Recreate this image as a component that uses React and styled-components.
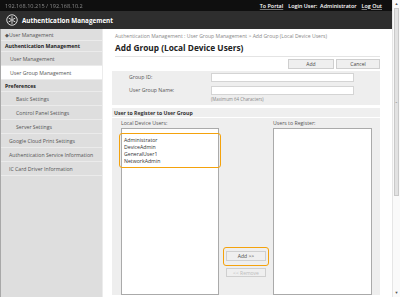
import React from "react";
import styled, { createGlobalStyle } from "styled-components";

const GlobalStyle = createGlobalStyle`
  html, body {
    margin: 0;
    padding: 0;
    width: 400px;
    height: 297px;
    overflow: hidden;
    background: #fff;
    font-family: "Open Sans", "Noto Sans", Arial, sans-serif;
  }
`;

const Page = styled.div`
  display: flex;
  width: 400px;
  height: 297px;
`;

const Window = styled.div`
  flex: 1;
  display: flex;
  flex-direction: column;
  min-width: 0;
`;

const TopBar = styled.div`
  height: 11px;
  background: #0f0f0f;
  display: flex;
  align-items: center;
  padding: 0 10px 0 5px;
  font-size: 5.4px;
  color: #fff;
`;

const Blurred = styled.span`
  color: #8a8a8a;
  filter: blur(0.7px);
  font-size: 5.6px;
`;

const TopLinks = styled.div`
  margin-left: auto;
  display: flex;
  gap: 5px;
  font-weight: 600;

  a {
    color: #fff;
    text-decoration: underline;
    text-decoration-color: #777;
  }
`;

const Header = styled.div`
  height: 18px;
  background: #2e2e2e;
  display: flex;
  align-items: center;
  gap: 4px;
  padding-left: 6px;
  color: #fff;
  font-weight: 700;
  font-size: 6.3px;
`;

const Body = styled.div`
  flex: 1;
  display: flex;
  min-height: 0;
`;

const Sidebar = styled.nav`
  width: 101px;
  flex-shrink: 0;
  background: #dedede;
  border-left: 1px solid #a8a8a8;
  border-right: 1px solid #ececec;
  display: flex;
  flex-direction: column;
  font-size: 5.2px;
  color: #555;
`;

const NavRow = styled.div`
  height: ${(p) => p.h || 14}px;
  display: flex;
  align-items: center;
  padding-left: ${(p) => p.indent}px;
  border-bottom: 1px solid #ebebeb;
  box-sizing: border-box;
  background: ${(p) => (p.active ? "#fff" : "transparent")};
  font-weight: ${(p) => (p.bold ? 700 : 400)};
  color: ${(p) => (p.bold ? "#222" : "#555")};
`;

const Content = styled.main`
  flex: 1;
  display: flex;
  flex-direction: column;
  padding: 2px 12px 2px 9px;
  min-width: 0;
`;

const Crumbs = styled.div`
  font-size: 5.1px;
  color: #888;
  padding-left: 3px;
  height: 9px;
  display: flex;
  align-items: center;
`;

const Title = styled.h1`
  margin: 0 0 0 3px;
  padding: 2px 0 3px;
  font-size: 8.3px;
  font-weight: 700;
  color: #222;
  border-bottom: 1px solid #e4e4e4;
`;

const ButtonRow = styled.div`
  display: flex;
  justify-content: flex-end;
  gap: 2px;
  padding: 2px 0;
`;

const Button = styled.button`
  display: block;
  width: ${(p) => p.w}px;
  height: ${(p) => p.h || 10}px;
  padding: 0;
  border: 1px solid #cfcfcf;
  background: #efefef;
  font-family: inherit;
  font-size: 5px;
  color: ${(p) => (p.disabled ? "#bbb" : "#444")};
`;

const FormBox = styled.div`
  background: #eeeeee;
  padding: 2px 0 3px;
  display: flex;
  flex-direction: column;
  gap: 4px;
`;

const FieldRow = styled.div`
  display: grid;
  grid-template-columns: 99px 143px;
  align-items: start;
`;

const Label = styled.label`
  font-size: 5.2px;
  color: #555;
  padding-left: 17px;
  line-height: 9px;
`;

const Input = styled.div`
  height: 9px;
  background: #fff;
  border: 1px solid #d4d4d4;
  box-sizing: border-box;
`;

const Hint = styled.div`
  font-size: 4.4px;
  color: #888;
  padding-top: 1px;
`;

const SectionHead = styled.div`
  margin-top: 3px;
  background: #efefef;
  height: 9px;
  display: flex;
  align-items: center;
  padding-left: 2px;
  font-size: 5.2px;
  font-weight: 700;
  color: #333;
`;

const Panel = styled.div`
  flex: 1;
  margin-top: 1px;
  background: #eeeeee;
  display: grid;
  grid-template-columns: 98px 54px 99px;
  padding: 0 9px 0 9px;
  min-height: 0;
`;

const Column = styled.div`
  display: flex;
  flex-direction: column;
  min-height: 0;
`;

const ColLabel = styled.div`
  font-size: 5.2px;
  color: #555;
  height: 10px;
  display: flex;
  align-items: flex-end;
  padding-bottom: 1px;
  box-sizing: border-box;
`;

const ListBox = styled.div`
  flex: 1;
  background: #fff;
  border: 1px solid #aaa;
  padding-top: 4px;
  font-size: 5.2px;
  color: #333;
`;

const Highlight = styled.div`
  margin: 0 -3px;
  padding: 3px 4px 2px;
  border: 1.5px solid #f4a20c;
  border-radius: 3px;
`;

const Item = styled.div`
  line-height: 7.1px;
`;

const Middle = styled.div`
  display: flex;
  flex-direction: column;
  align-items: center;
  padding-top: 129px;
  gap: 2px;
`;

const HighlightBtn = styled.div`
  border: 1.5px solid #f4a20c;
  border-radius: 3px;
  padding: 3px 2px 4px;
`;

const Scrollbar = styled.div`
  width: 8px;
  flex-shrink: 0;
  background: #fafafa;
  border-left: 1px solid #e6e6e6;
  display: flex;
  flex-direction: column;
  align-items: center;
  box-sizing: border-box;
  font-size: 4px;
  color: #555;
`;

const Arrow = styled.div`
  height: 8px;
  line-height: 8px;
`;

const Thumb = styled.div`
  width: 5px;
  height: 188px;
  background: #e2e2e2;
  border: 1px solid #c9c9c9;
  box-sizing: border-box;
  display: flex;
  align-items: center;
  justify-content: center;
  font-size: 3px;
  color: #777;
`;

const Spacer = styled.div`
  flex: 1;
`;

const Logo = () => (
  <svg width="12" height="12" viewBox="0 0 24 24" fill="none" stroke="#fff">
    <circle cx="12" cy="12" r="10.5" strokeWidth="1.6" />
    <g strokeWidth="1.6" strokeLinecap="round">
      <path d="M12 5 L12 10.5" />
      <path d="M12 13.5 L12 19" />
      <path d="M6 8.5 L10.6 11" />
      <path d="M13.4 13 L18 15.5" />
      <path d="M18 8.5 L13.4 11" />
      <path d="M10.6 13 L6 15.5" />
    </g>
  </svg>
);

const navItems = [
  { label: "◆User Management", indent: 4, h: 12 },
  { label: "Authentication Management", indent: 4, h: 11, bold: true },
  { label: "User Management", indent: 9 },
  { label: "User Group Management", indent: 9, active: true },
  { label: "Preferences", indent: 4, h: 12, bold: true },
  { label: "Basic Settings", indent: 15 },
  { label: "Control Panel Settings", indent: 15 },
  { label: "Server Settings", indent: 15 },
  { label: "Google Cloud Print Settings", indent: 8 },
  { label: "Authentication Service Information", indent: 8 },
  { label: "IC Card Driver Information", indent: 8 },
];

const localUsers = ["Administrator", "DeviceAdmin", "GeneralUser1", "NetworkAdmin"];

export default function App() {
  return (
    <>
      <GlobalStyle />
      <Page>
        <Window>
          <TopBar>
            <Blurred>192.168.10.215 / 192.168.10.2</Blurred>
            <TopLinks>
              <a>To Portal</a>
              <span>Login User:&nbsp; Administrator</span>
              <a>Log Out</a>
            </TopLinks>
          </TopBar>
          <Header>
            <Logo />
            Authentication Management
          </Header>
          <Body>
            <Sidebar>
              {navItems.map((n) => (
                <NavRow key={n.label} indent={n.indent} h={n.h} bold={n.bold} active={n.active}>
                  {n.label}
                </NavRow>
              ))}
            </Sidebar>
            <Content>
              <Crumbs>
                Authentication Management : User Group Management &gt; Add Group (Local Device Users)
              </Crumbs>
              <Title>Add Group (Local Device Users)</Title>
              <ButtonRow>
                <Button w={46}>Add</Button>
                <Button w={44}>Cancel</Button>
              </ButtonRow>
              <FormBox>
                <FieldRow>
                  <Label>Group ID:</Label>
                  <Input />
                </FieldRow>
                <FieldRow>
                  <Label>User Group Name:</Label>
                  <div>
                    <Input />
                    <Hint>(Maximum 64 Characters)</Hint>
                  </div>
                </FieldRow>
              </FormBox>
              <SectionHead>User to Register to User Group</SectionHead>
              <Panel>
                <Column>
                  <ColLabel>Local Device Users:</ColLabel>
                  <ListBox>
                    <Highlight>
                      {localUsers.map((u) => (
                        <Item key={u}>{u}</Item>
                      ))}
                    </Highlight>
                  </ListBox>
                </Column>
                <Middle>
                  <HighlightBtn>
                    <Button w={40}>Add &gt;&gt;</Button>
                  </HighlightBtn>
                  <Button w={40} h={9} disabled>
                    &lt;&lt; Remove
                  </Button>
                </Middle>
                <Column>
                  <ColLabel>Users to Register:</ColLabel>
                  <ListBox />
                </Column>
              </Panel>
            </Content>
          </Body>
        </Window>
        <Scrollbar>
          <Arrow>▲</Arrow>
          <Thumb>≡</Thumb>
          <Spacer />
          <Arrow>▼</Arrow>
        </Scrollbar>
      </Page>
    </>
  );
}
